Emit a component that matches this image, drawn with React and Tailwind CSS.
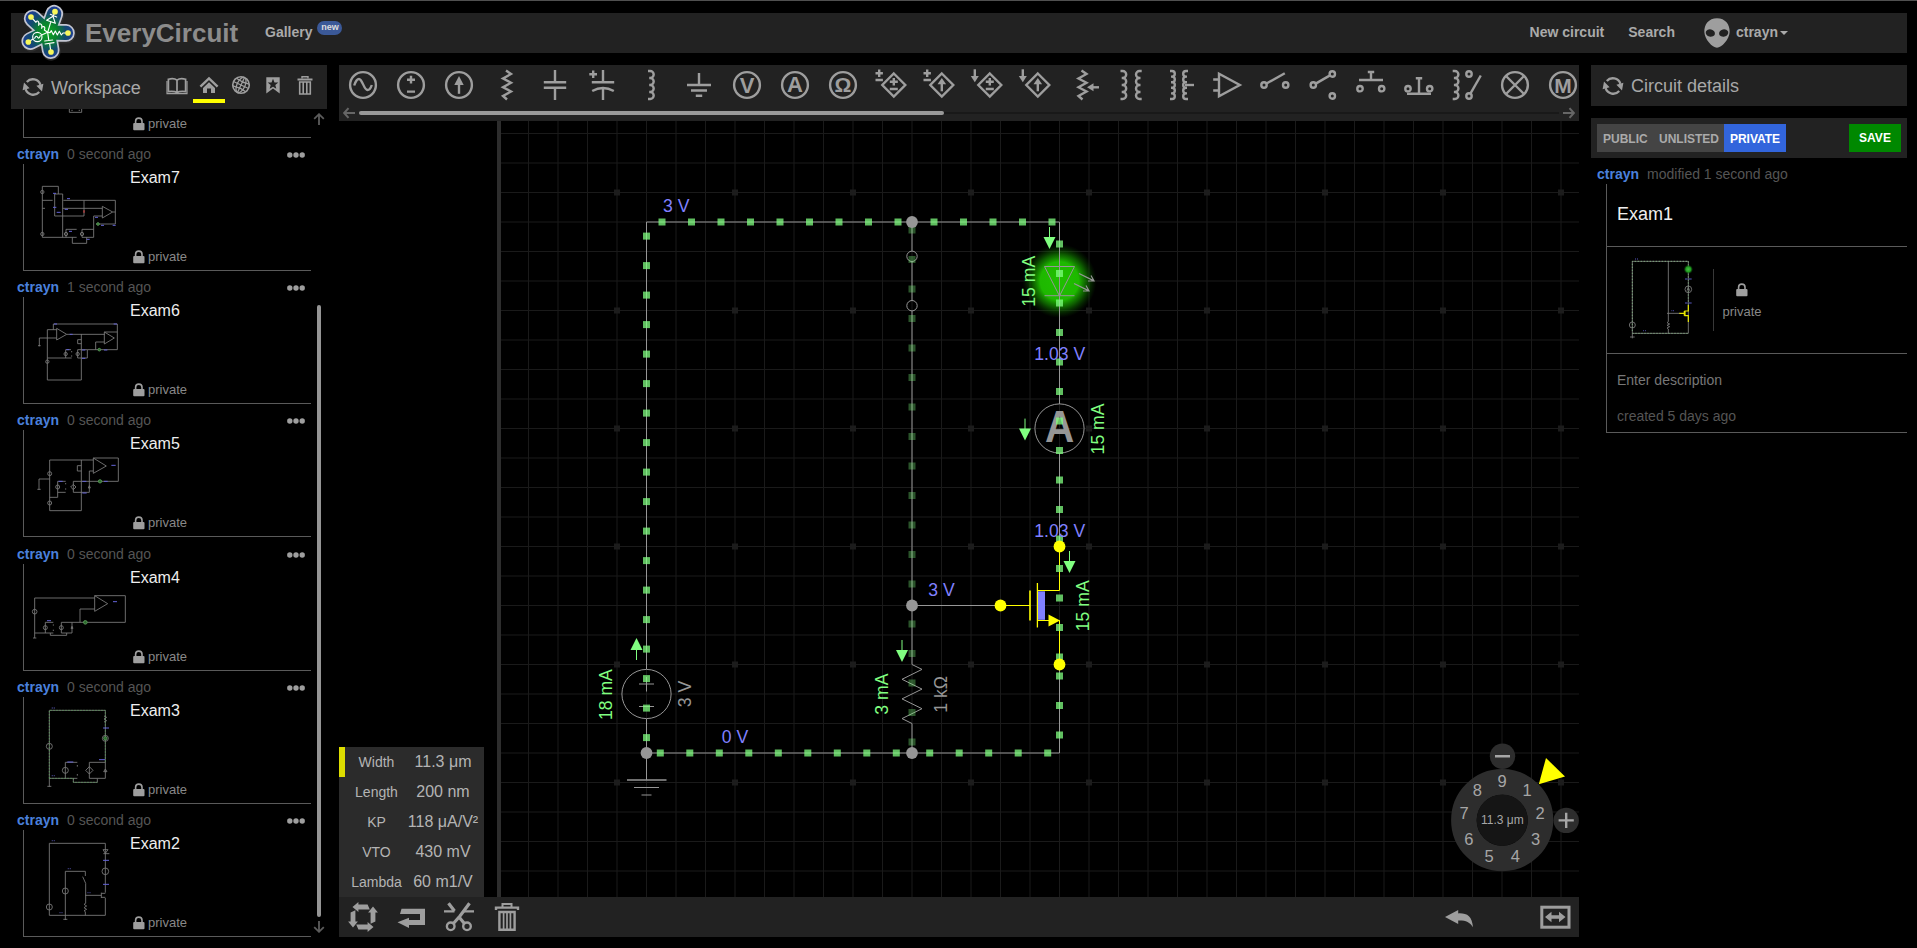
import React from "react";

const FG = "#9e9e9e";

/* ---------- small shared icons ---------- */

function Refresh() {
  return (
    <svg width="22" height="20" viewBox="-11 -10 22 20" className="shrink-0" fill="none" stroke={FG} strokeWidth="2.3">
      <path d="M-6.2 -5 A8 8 0 0 1 7.4 -2.2" />
      <path d="M6.2 5 A8 8 0 0 1 -7.4 2.2" />
      <path d="M3.4 -1.2 L10.4 -3.2 L9 4.6 Z M-3.4 1.2 L-10.4 3.2 L-9 -4.6 Z" fill={FG} stroke="none" />
    </svg>
  );
}

function Lock() {
  return (
    <svg width="12" height="14" viewBox="0 0 12 14" className="shrink-0">
      <path d="M2.6 7 V4.3 a3.2 3.2 0 0 1 6.4 0 V7" fill="none" stroke={FG} strokeWidth="1.6" />
      <rect x="0.2" y="6" width="11.3" height="7.2" rx="1" fill={FG} />
    </svg>
  );
}

function Trash() {
  return (
    <svg width="20" height="22" viewBox="-10 -11 20 22" fill="none" stroke={FG}>
      <path d="M-7.5 -6.5 H7.5" strokeWidth="2" />
      <path d="M-3 -7.5 V-9.3 H3 V-7.5" strokeWidth="1.4" />
      <path d="M-5.3 -4 V8 H5.3 V-4 Z" strokeWidth="1.6" />
      <path d="M-1.8 -4 V8 M1.8 -4 V8" strokeWidth="1.6" />
    </svg>
  );
}

function Logo() {
  const arms = [[93, 50], [165, 34], [204, 98], [153, 155], [85, 125]];
  const d = arms.map(([x, y]) => `M143 96 L${x + (143 - x) * 0.1} ${y + (96 - y) * 0.1}`).join(" ");
  return (
    <svg width="56" height="60" viewBox="60 8 168 180" className="-mt-[1px] shrink-0" strokeLinecap="round" strokeLinejoin="round" fill="none">
      <defs>
        <radialGradient id="core" gradientUnits="userSpaceOnUse" cx="143" cy="96" r="78">
          <stop offset="0" stopColor="#0ca81e" />
          <stop offset="0.4" stopColor="#0a8030" />
          <stop offset="0.7" stopColor="#124a70" />
          <stop offset="1" stopColor="#1f3f93" />
        </radialGradient>
      </defs>
      <path d={d} stroke="#333" strokeWidth="56" transform="translate(2 4)" opacity="0.7" />
      <path d={d} stroke="#c3c6d2" strokeWidth="53" />
      <path d={d} stroke="url(#core)" strokeWidth="43" />
      <circle cx="143" cy="96" r="30" fill="url(#core)" />
      <g stroke="#fff" strokeWidth="3.4">
        <path d="M143 96 L150 97 L154 91 L160 103 L166 92 L172 104 L178 93 L184 104 L189 98 L200 98" />
        <path d="M143 96 L146 118 M134 122 L158 119 M135 131 L162 127 M149 130 L152 150" />
        <circle cx="112" cy="110" r="14" />
        <path d="M104 114 C108 104 112 108 113 111 C116 116 119 112 121 106 M143 96 L125 104 M99 116 L88 123" />
        <path d="M143 96 L133 89 C139 77 125 76 125 84 C129 68 116 68 116 75 C119 59 108 60 108 66 L96 53" />
        <path d="M143 96 L152 66 M140 60 L166 69 L159 48 Z M151 42 L170 50 M160 47 L164 36" />
      </g>
      {arms.map(([x, y]) => (
        <circle key={x} cx={x} cy={y} r="8.5" fill="#f7f75a" />
      ))}
    </svg>
  );
}

/* ---------- component toolbar ---------- */

const Ring = ({ children }) => (
  <g>
    <circle r="12.9" />
    {children}
  </g>
);
const Letter = ({ children, y = 7.6, size = 22 }) => (
  <text x="0" y={y} textAnchor="middle" fill={FG} stroke="none" fontSize={size} fontWeight="700" fontFamily="Liberation Sans, sans-serif">
    {children}
  </text>
);
const ZIG = "M-1 -14.5 L4 -11 L-4 -6.5 L4 -2.3 L-4 2.3 L4 6.5 L-4 11 L0 14.5";
const COIL = "M-4 -14 h2.2 a3.4 3.4 0 0 1 0 7 h-1 h1 a3.5 3.5 0 0 1 0 7 h-1 h1 a3.5 3.5 0 0 1 0 7 h-1 h1 a3.4 3.4 0 0 1 0 7 h-2.2";
const TIGHT = "M-4 -14 h2 a2.6 2.6 0 0 1 0 5.6 h-1 h1 a2.6 2.6 0 0 1 0 5.6 h-1 h1 a2.6 2.6 0 0 1 0 5.6 h-1 h1 a2.6 2.6 0 0 1 0 5.6 h-1 h1 a2.6 2.6 0 0 1 0 5.6 h-2";
const Up = () => (
  <g>
    <path d="M0 6.3 V-2" />
    <path d="M0 -7 L4.3 -0.8 H-4.3 Z" fill={FG} stroke="none" />
  </g>
);
const PM = () => <path d="M-4 -3.2 H4 M0 -7 V0.6 M-4 4 H4" />;
const Sense = () => <path d="M-17.5 -11.7 h7.4 M-13.8 -15.4 v7.4 M-17.5 -5 h7.4" />;
const SenseI = () => (
  <g>
    <path d="M-14.2 -15.7 V-8" />
    <path d="M-18.2 -9 h8 L-14.2 -2.8 Z" fill={FG} stroke="none" />
  </g>
);
const Dependent = ({ left, children }) => (
  <g>
    {left}
    <g transform="translate(0.8 0)">
      <path d="M0 -11.5 L11.5 0 L0 11.5 L-11.5 0 Z" />
      {children}
    </g>
  </g>
);

const TOOLS = [
  <Ring><path d="M-8.8 0.5 C-7.5 -3.5 -6 -6 -4 -6 C-0.5 -6 0.8 5 4.5 5 C6.6 5 8 2.5 8.8 0" /></Ring>,
  <Ring><path d="M-4 -5.3 H4 M0 -9.2 V-1.4 M-4 6.6 H4" /></Ring>,
  <Ring><g><path d="M0 8.8 V-2" /><path d="M0 -9 L4.7 0 H-4.7 Z" fill={FG} stroke="none" /></g></Ring>,
  <path d={ZIG} />,
  <path d="M0 -15 V-2.8 M-11.2 -2.8 H11.2 M-11.2 2.8 H11.2 M0 2.8 V15" />,
  <path d="M0 -15 V-2.8 M-11.2 -2.8 H11.2 M0 3 V15 M-10.8 6 Q0 0 10.8 6 M-13.7 -10.7 H-6 M-9.8 -14.5 V-6.9" />,
  <path d={COIL} transform="translate(1 0)" />,
  <path d="M0 -12 V0 M-12 0 H12 M-8 5.5 H8 M-3.2 10.8 H3.2" />,
  <Ring><Letter>V</Letter></Ring>,
  <Ring><Letter y={6.8}>A</Letter></Ring>,
  <Ring><Letter y={7} size={21}>Ω</Letter></Ring>,
  <Dependent left={<Sense />}><PM /></Dependent>,
  <Dependent left={<Sense />}><Up /></Dependent>,
  <Dependent left={<SenseI />}><PM /></Dependent>,
  <Dependent left={<SenseI />}><Up /></Dependent>,
  <g>
    <path d={ZIG} transform="translate(-2.5 0)" />
    <path d="M14 2.3 H7" />
    <path d="M2 2.3 L8.5 -1.7 V6.3 Z" fill={FG} stroke="none" />
  </g>,
  <g>
    <path d={COIL} transform="translate(-8.5 0)" />
    <path d={COIL} transform="translate(4.7 0) scale(-1 1)" />
  </g>,
  <g>
    <path d={TIGHT} transform="translate(-7 0)" />
    <path d={TIGHT} transform="translate(3 0) scale(-1 1)" />
    <path d="M4 0 H13" />
  </g>,
  <path d="M-10 -11.2 V11.2 L10.8 0 Z M-15.8 -5.5 H-10 M-15.8 5.5 H-10" />,
  <g>
    <circle cx="-13" r="2.7" /><circle cx="8.7" r="2.7" />
    <path d="M-10.5 -1.5 L7.8 -11.8" />
  </g>,
  <g>
    <circle cx="-11.7" r="2.7" /><circle cx="7.3" cy="-11" r="2.7" /><circle cx="7.3" cy="11" r="2.7" />
    <path d="M-9.3 -1.4 L5 -9.6" />
  </g>,
  <g>
    <circle cx="-13" cy="3.7" r="2.7" /><circle cx="8.7" cy="3.7" r="2.7" />
    <path d="M-14 -5 H10 M-2 -13 V-5 M-5.2 -13 H1.2" />
  </g>,
  <g>
    <circle cx="-13" cy="3.7" r="2.7" /><circle cx="8.7" cy="3.7" r="2.7" />
    <path d="M-14 8.7 H10 M-2 -6.7 V8.7 M-5.2 -6.7 H1.2" />
  </g>,
  <g>
    <path d={COIL} transform="translate(-12.3 0)" />
    <circle cy="-11" r="2.7" /><circle cy="11" r="2.7" />
    <path d="M1.4 8.6 L11.8 -9.5" />
  </g>,
  <Ring><path d="M-9 -9 L9 9 M-9 9 L9 -9" /></Ring>,
  <Ring><Letter y={7.6} size={21}>M</Letter></Ring>,
];

function Toolbar() {
  return (
    <div className="h-14 overflow-hidden bg-[#222222]">
      <div className="flex h-10 w-[1248px]">
        {TOOLS.map((t, i) => (
          <svg key={i} width="48" height="40" viewBox="-24 -20 48 40" className="shrink-0" fill="none" stroke={FG} strokeWidth="2.4">
            <g transform={i > 10 && i < 24 ? "translate(2 0)" : undefined}>{t}</g>
          </svg>
        ))}
      </div>
      <div className="flex h-4 items-center pl-1 pr-1">
        <svg width="12" height="12" viewBox="0 0 12 12" className="shrink-0" fill="none" stroke="#666" strokeWidth="2"><path d="M12 6 H1.5 M5.5 1.2 L1.2 6 L5.5 10.8" /></svg>
        <div className="ml-1 h-1 w-[585px] rounded-full bg-[#999999]" />
        <div className="h-0.5 w-[615px] bg-[#191919]" />
        <svg width="12" height="12" viewBox="0 0 12 12" className="ml-1 shrink-0" fill="none" stroke="#666" strokeWidth="2"><path d="M0 6 H10.5 M6.5 1.2 L10.8 6 L6.5 10.8" /></svg>
      </div>
    </div>
  );
}

/* ---------- schematic ---------- */

const range = (start, end, step = 29.5) => {
  const out = [];
  for (let v = start; v <= end + 0.5; v += step) out.push(v);
  return out;
};

const V = ({ x, ys, o = 0.75 }) => ys.map((y) => <rect key={`${x}-${y}`} x={x - 3.5} y={y - 3.5} width="7" height="7" fill="#80ff80" opacity={o} />);
const H = ({ y, xs }) => xs.map((x) => <rect key={`${x}-${y}`} x={x - 3.5} y={y - 3.5} width="7" height="7" fill="#80ff80" opacity="0.75" />);

const Down = ({ x, y }) => (
  <g>
    <path d={`M${x} ${y} V${y + 11}`} stroke="#80ff80" />
    <path d={`M${x - 6} ${y + 10} H${x + 6} L${x} ${y + 22} Z`} fill="#80ff80" />
  </g>
);
const Rot = ({ x, y, c = "#80ff80", children }) => (
  <text transform={`translate(${x} ${y - 0.3}) rotate(-90)`} fill={c} fontSize="17.6">{children}</text>
);

function Schematic() {
  const gx = range(528.5, 1578);
  const gy = range(133.5, 896);
  return (
    <svg width="1240" height="776" viewBox="339 121 1240 776" className="block" fontFamily="Liberation Sans, sans-serif">
      <defs>
        <radialGradient id="glow">
          <stop offset="0" stopColor="#20c000" />
          <stop offset="0.52" stopColor="#1eb800" />
          <stop offset="0.72" stopColor="#159000" stopOpacity="0.65" />
          <stop offset="1" stopColor="#0a5000" stopOpacity="0" />
        </radialGradient>
      </defs>
      <g stroke="#1a1a1a">
        {gx.map((x) => <path key={x} d={`M${x} 121 V897`} />)}
        {gy.map((y) => <path key={y} d={`M501 ${y} H1579`} />)}
      </g>
      <g fill="#1c1c1c">
        {range(617, 1562, 118).map((x) => range(192.5, 790, 118).map((y) => <rect key={`${x}_${y}`} x={x - 3} y={y - 3} width="6" height="6" />))}
      </g>
      <rect x="497" y="121" width="4" height="776" fill="#2d2d2d" />

      <circle cx="1059.5" cy="281" r="37" fill="url(#glow)" />

      <g fill="none" stroke="#969696">
        <path d="M646.5 669 V222 H1059.5 V404" />
        <path d="M1059.5 453 V546.5 M1059.5 664.5 V753 H646.5 V719 M646.5 753 V780" />
        <path d="M912 222 V251 M912 261.5 V300.5 M912 311 V664.5 M912 723.5 V753 M912 605.5 H1000" />
        <circle cx="912" cy="256.3" r="5.2" />
        <circle cx="912" cy="305.7" r="5.2" />
        <path d="M912 664.5 L922 669.4 L902 679.3 L922 689.1 L902 698.9 L922 708.7 L902 718.6 L912 723.5" />
        <circle cx="646.5" cy="694" r="24.6" />
        <path d="M639 684 H654 M646.5 677 V691.5 M639 706.5 H654" />
        <path d="M627 780 H666.5" strokeWidth="1.4" />
        <path d="M634 787.5 H659 M641.5 795 H651.5" />
        <path d="M1044.5 266.5 H1074.5 L1059.5 296 Z M1044.5 295.7 H1074.5" />
        <path d="M1079 273.5 L1093.5 280.6 M1088 281 L1094 281 L1091 275.5 M1074 283.5 L1088.5 290.6 M1083 291 L1089 291 L1086 285.5" strokeWidth="1.2" />
        <circle cx="1059.5" cy="428.5" r="24.6" />
      </g>
      <text transform="translate(1059.5 442) scale(.9 1)" textAnchor="middle" fontSize="45" fontWeight="700" fill="#969696">A</text>

      <g stroke="#ffff00" fill="none">
        <path d="M1000 605.5 H1030 M1037.5 590.5 H1059.5 V546.5 M1037.5 620.5 H1059.5 V664.5" />
        <path d="M1030 590.5 V620.5" strokeWidth="1.6" />
        <path d="M1037.4 583 V627.5" strokeWidth="1.3" />
        <path d="M1048.5 614.5 V626.5 L1060 620.5 Z" fill="#ffff00" stroke="none" />
      </g>
      <rect x="1038" y="591.3" width="7" height="28.5" fill="#8080ff" />

      <H y={222} xs={range(662, 898.5)} />
      <H y={222} xs={range(934, 1052)} />
      <H y={753} xs={range(660.3, 897)} />
      <H y={753} xs={range(929.7, 1048)} />
      <V x={646.5} ys={range(236.1, 738)} />
      <V x={912} ys={range(230, 584.5)} o={0.33} />
      <V x={912} ys={range(624, 742)} o={0.33} />
      <V x={1059.5} ys={range(244, 657.5)} />
      <V x={1059.5} ys={range(676, 735.5)} />

      <g fill="#969696">
        <circle cx="646.5" cy="753" r="5.9" />
        <circle cx="912" cy="222" r="5.9" />
        <circle cx="912" cy="605.5" r="5.9" />
        <circle cx="912" cy="753" r="5.9" />
      </g>
      <g fill="#ffff00">
        <circle cx="1000.5" cy="605.5" r="5.9" />
        <circle cx="1059.5" cy="546.5" r="5.9" />
        <circle cx="1059.5" cy="664.5" r="5.9" />
      </g>

      <path d="M636.5 660 V649" stroke="#80ff80" />
      <path d="M630.5 650 H642.5 L636.5 638 Z" fill="#80ff80" />
      <Down x={1049.5} y={227} />
      <Down x={1025} y={418.6} />
      <Down x={1069.5} y={551} />
      <Down x={902} y={640} />

      <g fill="#8080ff" fontSize="17.6">
        <text x="663" y="212">3 V</text>
        <text x="1059.7" y="360" textAnchor="middle">1.03 V</text>
        <text x="1059.7" y="537" textAnchor="middle">1.03 V</text>
        <text x="928.3" y="595.5">3 V</text>
        <text x="721.8" y="743">0 V</text>
      </g>
      <Rot x={1035} y={307}>15 mA</Rot>
      <Rot x={1103.7} y={454.7}>15 mA</Rot>
      <Rot x={1089} y={631.5}>15 mA</Rot>
      <Rot x={888} y={715}>3 mA</Rot>
      <Rot x={612} y={720.3}>18 mA</Rot>
      <Rot x={947} y={713} c="#969696">1 kΩ</Rot>
      <Rot x={690.7} y={707.5} c="#969696">3 V</Rot>
    </svg>
  );
}

function Wheel() {
  return (
    <svg width="130" height="130" viewBox="1449 742 130 130" className="absolute bottom-[25px] right-0" fontFamily="Liberation Sans, sans-serif" fill="#a6a6a6" textAnchor="middle">
      <circle cx="1502.2" cy="820.2" r="38.3" fill="none" stroke="#2d2d2d" strokeWidth="25.6" />
      <circle cx="1502.2" cy="820.2" r="25.6" fill="#151515" />
      <circle cx="1502.5" cy="756.3" r="12.7" fill="#2d2d2d" />
      <circle cx="1566.2" cy="820.4" r="12.7" fill="#2d2d2d" />
      <path d="M1495 756.3 H1510 M1558.6 820.4 H1573.8 M1566.2 812.8 V828" stroke="#a6a6a6" strokeWidth="2.4" />
      <path d="M1546 758 L1565 776.6 L1538.8 784.2 Z" fill="#ffff00" />
      {[9, 1, 2, 3, 4, 5, 6, 7, 8].map((n, i) => {
        const a = (i * 40 * Math.PI) / 180;
        return <text key={n} x={1502.2 + 38.6 * Math.sin(a)} y={826 - 38.6 * Math.cos(a)} fontSize="16.5">{n}</text>;
      })}
      <text x="1502.4" y="824" fontSize="12">11.3 μm</text>
    </svg>
  );
}

const PARAMS = [
  ["Width", "11.3 μm"],
  ["Length", "200 nm"],
  ["KP", "118 μA/V²"],
  ["VTO", "430 mV"],
  ["Lambda", "60 m1/V"],
];

function Params() {
  return (
    <div className="absolute bottom-0 left-0 w-[145px] bg-[#2b2b2b] text-[#b4b4b4]">
      {PARAMS.map(([k, v], i) => (
        <div key={k} className="flex h-[30px] items-center whitespace-nowrap">
          <div className={i === 0 ? "h-full w-1.5 bg-[#dddd00]" : "h-full w-1.5"} />
          <div className="w-[63px] text-center text-sm">{k}</div>
          <div className="w-[70px] text-center text-base"><span className="-mx-2">{v}</span></div>
        </div>
      ))}
    </div>
  );
}

const Cell = ({ children, className = "" }) => (
  <svg width="48" height="40" viewBox="-24 -20 48 40" className={className} fill="none" stroke={FG} strokeWidth="2.4">{children}</svg>
);

function BottomBar() {
  return (
    <div className="flex h-10 bg-[#222222]">
      <Cell>
        {[0, 90, 180, 270].map((r) => (
          <path key={r} transform={`rotate(${r})`} d="M-10.5 -10 L-4.6 -14.9 V-12.4 H4.6 L6.8 -7.6 H-4.6 V-5.1 Z" fill={FG} stroke="none" />
        ))}
      </Cell>
      <Cell>
        <path d="M-9.5 -8.3 H14 V8 H-2 V11 L-13.5 5.3 L-2 0.8 V3 H9 V-3 H-11 Z" fill={FG} stroke="none" />
      </Cell>
      <Cell>
        <circle cx="-8.3" cy="9.3" r="3.8" /><circle cx="8" cy="9.3" r="3.8" />
        <path d="M-15 -5.6 H-4.5 M4.5 -5.6 H15" />
        <path d="M-5.6 6.5 L1 -1 L10.5 -13.8" strokeWidth="3.2" />
        <path d="M5.4 6.5 L0 0 M-4.5 -6 L-10.5 -13.8" strokeWidth="3.2" />
      </Cell>
      <Cell>
        <path d="M-11 -7 V-9.4 H11 V-7" />
        <path d="M-4.5 -10 V-13 H4.5 V-10" strokeWidth="2" />
        <path d="M-7.6 -5 V12.8 H7.6 V-5 Z" />
        <path d="M-3.4 -5 V12 M0 -5 V12 M3.4 -5 V12" strokeWidth="1.7" />
      </Cell>
      <Cell className="ml-auto">
        <path d="M-14 0 L-0.8 -7 V-3.6 C8 -4 13 -1 14 10.3 C10.5 5 7 3.4 -0.8 3.6 V7 Z" fill={FG} stroke="none" />
      </Cell>
      <Cell className="ml-12">
        <rect x="-13.2" y="-9.8" width="27.2" height="20" strokeWidth="3" />
        <path d="M-10 0 L-3.5 -5.2 V-1.8 H4 V-5.2 L10.5 0 L4 5.2 V1.8 H-3.5 V5.2 Z" fill={FG} stroke="none" />
      </Cell>
    </div>
  );
}

/* ---------- workspace list ---------- */

const dia = (x, y, r) => `M${x} ${y - r} L${x + r} ${y} L${x} ${y + r} L${x - r} ${y} Z`;

const ITEMS = [
  {
    title: "Exam7", ago: "0 second ago", top: 492,
    wire: "M127 559 V712 H230 M127 559 H175 V582 M164 648 V582 H188 V712 M164 648 H252 V601 M127 601 H158 M190 601 H346 V672 H288 M188 625 H307 M307 619 V654 L338 636 Z M338 636 H346 M307 648 H281 V712 H246 V688 H281 M198 712 V688 H230 M217 712 V730 H260 V712 M127 625 h8",
    circ: [[127, 576, 5], [127, 702, 5], [198, 702, 5], [246, 702, 5]],
    blue: "M159 580 h9 M201 596 h9 M159 622 h10 M194 628 h10 M170 637 h12 M285 652 h9 M303 676 h9 M338 676 h9 M207 694 h9 M260 718 h9",
    led: [294, 672, 4], red: [252, 635],
  },
  {
    title: "Exam6", ago: "1 second ago", top: 82,
    wire: "M160 180 V163 H352 V240 H262 M142 180 H170 M142 180 V331 H244 V193 M170 176 V211 L200 194 Z M118 230 V205 H170 M114 228 h8 M200 194 H314 M313 187 V223 L343 205 Z H352 M287 240 V217 H313 M142 265 H215 M197 265 V240 H213 M215 244 v4 M215 257 v4 M233 240 H262 V265 H233 Z M244 210 H233 V222 H244",
    circ: [[142, 276, 5], [197, 253, 5], [233, 253, 5]],
    blue: "M162 163 h9 M341 163 h10 M209 194 h9 M199 240 h9 M246 241 h10 M246 266 h10 M312 241 h10", led: [298, 240, 4],
  },
  {
    title: "Exam5", ago: "0 second ago", top: 481,
    wire: "M149 571 H280 M149 571 V723 H244 V571 M280 565 V611 L319 589 Z H355 V635 H220 V668 H268 V604 H280 M117 660 V628 H149 M112 659 h10 M149 683 H173 V635 H197 M173 668 H197 M197 640 v4 M197 656 v4 M244 588 H232 V604 H244 M265 655 L268 648 L271 655 Z " + dia(220, 652, 8),
    circ: [[149, 612, 6], [149, 700, 6], [173, 652, 6]],
    blue: "M176 635 h12 M247 635 h12 M247 670 h13 M334 587 h13 M312 635 h11", led: [300, 635, 5],
  },
  {
    title: "Exam4", ago: "0 second ago", top: -107, tall: true,
    wire: "M104 115 V-5 H284 M284 -12 V35 L323 12 Z H376 V68 H184 V100 H216 V68 M240 68 V28 H284 M99 115 h10 M104 100 H160 M136 100 V68 H160 M160 74 v4 M160 90 v4 M151 100 V107 H200 V100 M213 86 L216 80 L219 86 Z",
    circ: [[104, 36, 7], [136, 84, 6], [184, 84, 6]], blue: "M141 63 h12 M339 6 h12", led: [256, 68, 5.5],
  },
  {
    title: "Exam3", ago: "0 second ago", top: 291,
    wire: "M148 560 V331 H316 V535 H292 M142 559 h12 M148 535 H232 M196 535 V487 H232 M232 495 v5 M232 522 v5 M316 487 H268 V535 H292 M220 535 V547 H292 V535 M312 348 l8 4 l-8 5 l8 5 l-8 4 M311 515 L316 507 L321 515 Z " + dia(268, 511, 11),
    circ: [[148, 439, 9], [196, 511, 9], [316, 415, 9]],
    blue: "M309 384 h18 M202 486 h18 M297 479 h18", dim: "M155 324 h4 M161 324 h4 M155 527 h4 M161 527 h4", led: [316, 415, 5],
    dots: "M148 535 V331 H316 V487 M148 535 H220 V547 H292",
  },
  {
    title: "Exam2", ago: "0 second ago", top: 690,
    wire: "M148 946 V730 H316 V878 M316 894 V946 H148 M196 960 V814 H256 V828 M248 830 L257 850 V910 l-5 3 l8 5 l-8 5 l8 5 l-8 4 l4 3 V946 M256 886 H304 M304 878 V894 M304 880 H316 M304 892 H316 M190 958 h12 M309 749 H324 L316 760 Z M310 761 H328",
    circ: [[148, 921, 9], [196, 873, 9], [316, 814, 10]],
    blue: "M309 781 h18 M309 853 h18", dim: "M155 722 h4 M161 722 h4 M203 806 h4 M209 806 h4 M262 878 h4 M268 878 h4 M178 938 h4 M184 938 h4",
  },
];

function Thumb({ item }) {
  return (
    <svg width="110" height="106" viewBox={`72 ${item.top} 330 318`} className="shrink-0 overflow-hidden" fill="none" stroke="#7c7c7c" strokeWidth="2.6">
      <path d={item.wire} />
      {item.dots && <path d={item.dots} stroke="#5aa05a" strokeDasharray="4 5" />}
      {item.circ.map(([x, y, r]) => <circle key={`${x}-${y}`} cx={x} cy={y} r={r} />)}
      <path d={item.blue} stroke="#6464d8" strokeWidth="3" />
      {item.dim && <path d={item.dim} stroke="#33336a" strokeWidth="4" />}
      {item.led && <circle cx={item.led[0]} cy={item.led[1]} r={item.led[2]} stroke="#5c9c5c" strokeWidth="2.6" fill="#2c6a2c" />}
      {item.red && <path d={`M${item.red[0]} ${item.red[1] - 4} v7`} stroke="#c04040" strokeWidth="4" />}
    </svg>
  );
}

function Privacy() {
  return (
    <div className="flex items-center pl-[3px] text-[13px] leading-4 text-[#888888]">
      <Lock />
      <span className="ml-[3px]">private</span>
    </div>
  );
}

function FirstItem() {
  return (
    <div className="ml-3 mr-4 flex h-[29px] shrink-0 items-end border-b border-l border-[#5a5a5a]">
      <svg width="106" height="28" viewBox="72 327 318 84" className="shrink-0" fill="none" stroke="#7c7c7c" strokeWidth="2.6">
        <path d="M208 327 V337 H245 V327 M214 331 h4 M236 331 h4" />
      </svg>
      <div className="pb-[5px]"><Privacy /></div>
    </div>
  );
}

function Item({ item }) {
  return (
    <div className={item.tall ? "flex h-[134px] shrink-0 flex-col" : "flex h-[133px] shrink-0 flex-col"}>
      <div className={item.tall ? "flex h-[27px] items-start pl-1.5 pt-[7px] text-sm leading-5" : "flex h-[26px] items-start pl-1.5 pt-[6px] text-sm leading-5"}>
        <span className="font-bold text-[#4a80dc]">ctrayn</span>
        <span className="ml-2 text-[#555555]">{item.ago}</span>
        <svg width="18" height="6" viewBox="0 0 18 6" className="ml-auto mr-[22px] mt-[8px]" fill={FG}>
          <circle cx="2.8" cy="3" r="2.7" /><circle cx="9" cy="3" r="2.7" /><circle cx="15.2" cy="3" r="2.7" />
        </svg>
      </div>
      <div className="ml-3 mr-4 flex flex-1 border-b border-l border-[#5a5a5a]">
        <Thumb item={item} />
        <div className="-ml-1 flex flex-1 flex-col justify-between pb-[5px] pt-[2px]">
          <div className="text-base leading-6 text-[#eeeeee]">{item.title}</div>
          <Privacy />
        </div>
      </div>
    </div>
  );
}

function Workspace() {
  return (
    <div className="flex w-[316px] flex-col">
      <div className="flex h-11 shrink-0 items-center bg-[#222222] pl-[11px]">
        <Refresh />
        <span className="ml-[7px] w-[103px] pt-px text-lg text-[#a8a8a8]">Workspace</span>
        <div className="ml-[7px] flex h-full text-center">
          <div className="flex w-8 justify-center pt-[10px]">
            <svg width="22" height="22" viewBox="-11 -11 22 22" fill="none" stroke={FG} strokeWidth="1.7">
              <path d="M0 6.5 C-2 5.3 -5 5.3 -8.6 5.6 V-6.8 C-5 -7.8 -2 -7.5 0 -5.8 C2 -7.5 5 -7.8 8.6 -6.8 V5.6 C5 5.3 2 5.3 0 6.5 Z M0 -6 V7" />
              <path d="M-10 -5 V7.6 H10 V-5" strokeWidth="1.2" />
            </svg>
          </div>
          <div className="flex w-8 flex-col items-center pt-[10px]">
            <svg width="22" height="22" viewBox="-11 -11 22 22" fill={FG}>
              <path d="M-8.6 0.6 L0 -7.6 L8.6 0.6" fill="none" stroke={FG} strokeWidth="2.4" />
              <path d="M-6 2 L0 -3.8 L6 2 V7 H2 V2.5 H-2 V7 H-6 Z" />
            </svg>
            <div className="mt-0.5 h-1 w-8 bg-[#ffff00]" />
          </div>
          <div className="flex w-8 justify-center pt-[9px]">
            <svg width="22" height="22" viewBox="-11 -11 22 22" fill="none" stroke={FG} strokeWidth="1.3">
              <circle r="8.3" strokeWidth="1.6" />
              <g transform="rotate(25)">
                <ellipse rx="4" ry="8.3" />
                <path d="M0 -8.3 V8.3 M-8.3 0 H8.3 M-7 -4.2 Q0 -2.6 7 -4.2 M-7 4.2 Q0 2.6 7 4.2" />
              </g>
            </svg>
          </div>
          <div className="flex w-8 justify-center pt-[10px]">
            <svg width="22" height="22" viewBox="-11 -11 22 22">
              <path d="M-6.7 -8.7 H6.7 V7.5 L0 2.6 L-6.7 7.5 Z" fill={FG} />
              <path d="M0 -7.3 L1.5 -3.6 L5.3 -3.4 L2.3 -1 L3.3 2.8 L0 0.7 L-3.3 2.8 L-2.3 -1 L-5.3 -3.4 L-1.5 -3.6 Z" fill="#222" />
            </svg>
          </div>
          <div className="flex w-8 justify-center pt-[10px]"><Trash /></div>
        </div>
      </div>
      <div className="flex h-[828px]">
        <div className="flex w-[316px] shrink-0 flex-col">
          <div className="pr-0"><FirstItem /></div>
          {ITEMS.map((it) => <Item key={it.title} item={it} />)}
        </div>
        <div className="-ml-[14px] flex w-3 shrink-0 flex-col items-center pt-1">
          <svg width="12" height="12" viewBox="0 0 12 12" className="shrink-0" fill="none" stroke="#5c5c5c" strokeWidth="1.8"><path d="M6 12 V1.5 M1.2 5.8 L6 1.2 L10.8 5.8" /></svg>
          <div className="mt-[180px] h-[612px] w-1 shrink-0 rounded-full bg-[#959595]" />
          <svg width="12" height="12" viewBox="0 0 12 12" className="mt-1 shrink-0" fill="none" stroke="#5c5c5c" strokeWidth="1.8"><path d="M6 0 V10.5 M1.2 6.2 L6 10.8 L10.8 6.2" /></svg>
        </div>
      </div>
    </div>
  );
}

/* ---------- details ---------- */

function DetailThumb() {
  return (
    <svg width="72" height="86" viewBox="372 765 216 258" className="-mt-[3px]" fill="none" stroke="#7c7c7c" strokeWidth="2.6">
      <defs>
        <radialGradient id="mini"><stop offset="0" stopColor="#48b848" /><stop offset="0.55" stopColor="#1fa01f" /><stop offset="1" stopColor="#0a3a0a" stopOpacity="0.1" /></radialGradient>
      </defs>
      <path d="M397 1012 V781 H565 V997 H397 M505 781 V962 l-4 3 l8 4 l-8 4 l8 4 l-8 4 l4 3 V997 M501 937 H540 M390 1008 H404" />
      <path d="M397 990 V781 H565 M397 997 H565 M565 781 V912" stroke="#7fb07f" strokeDasharray="4 5" />
      <circle cx="397" cy="972" r="9" /><circle cx="565" cy="865" r="10" />
      <path d="M561 869 L565 859 L569 869" />
      <circle cx="565" cy="805" r="14" fill="url(#mini)" stroke="none" />
      <path d="M538 937 H553 M553 930 V944 M565 912 V930 H555 V944 H565 V963" stroke="#e8e800" strokeWidth="3.6" />
      <path d="M405 774 h3 M411 774 h3 M555 834 h8 M566 834 h9 M555 906 h8 M566 906 h9 M514 929 h3 M519 929 h3 M429 989 h3 M435 989 h3" stroke="#3a3a80" strokeWidth="4" />
    </svg>
  );
}

function Details() {
  return (
    <div className="flex w-[316px] flex-col">
      <div className="flex h-[41px] items-center bg-[#222222] pl-[11px]">
        <Refresh />
        <span className="ml-[7px] text-lg leading-none text-[#a8a8a8]">Circuit details</span>
      </div>
      <div className="mt-3 flex h-10 items-center justify-between bg-[#222222] px-1.5 text-xs font-bold">
        <div className="flex h-7 bg-[#444444] pt-px leading-[29px] text-[#aaaaaa]">
          <span className="w-14 pl-1.5">PUBLIC</span>
          <span className="w-[71px] pl-1.5">UNLISTED</span>
          <span className="-mt-px h-7 w-[62px] bg-[#3265dc] pt-px text-center text-white">PRIVATE</span>
        </div>
        <button className="h-7 w-[52px] bg-[#008800] text-white">SAVE</button>
      </div>
      <div className="flex h-[26px] items-start pl-1.5 pt-[6px] text-sm leading-5">
        <span className="font-bold text-[#4a80dc]">ctrayn</span>
        <span className="ml-2 text-[#555555]">modified 1 second ago</span>
      </div>
      <div className="ml-[15px] flex h-[249px] flex-col border-b border-l border-[#5a5a5a]">
        <div className="flex h-[63px] items-center border-b border-[#5a5a5a] pb-0.5 pl-[10px] text-lg leading-6 text-[#eeeeee]">Exam1</div>
        <div className="flex h-[107px] items-center border-b border-[#5a5a5a] pl-[17px]">
          <DetailThumb />
          <div className="ml-[17px] h-[62px] w-px bg-[#383838]" />
          <div className="ml-2 flex w-10 flex-col items-center gap-[7px] pt-[3px] text-[13px] leading-4 text-[#888888]">
            <div className="-ml-px"><Lock /></div>
            <span>private</span>
          </div>
        </div>
        <div className="flex flex-1 flex-col gap-4 pl-[10px] pt-[16px] text-sm leading-5">
          <span className="text-[#777777]">Enter description</span>
          <span className="text-[#555555]">created 5 days ago</span>
        </div>
      </div>
    </div>
  );
}

function Header() {
  return (
    <div className="mx-[10px] ml-[11px] flex h-10 items-center bg-[#222222] text-sm font-bold text-[#aaaaaa]">
      <div className="ml-[9px] flex h-10 w-[65px] items-center"><Logo /></div>
      <span className="w-[180px] text-[26px] leading-none text-[#8c8c8c]">EveryCircuit</span>
      <span className="-mt-[3px]">Gallery</span>
      <span className="-mt-[11px] ml-[5px] flex h-[14px] w-[25px] items-center justify-center rounded-full bg-[#3b5998] pb-px text-[9px] leading-none text-[#dddddd]">new</span>
      <div className="ml-auto mr-[119px] flex items-center">
        <span className="-mt-[3px]">New circuit</span>
        <span className="-mt-[3px] ml-[24px]">Search</span>
        <svg width="26" height="30" viewBox="612 54 78 90" className="ml-[29px]">
          <path d="M651 55 C676 55 690 74 689 96 C688 118 665 143 651 143 C637 143 614 118 613 96 C612 74 626 55 651 55 Z" fill={FG} />
          <ellipse cx="631" cy="99" rx="14" ry="11" transform="rotate(14 631 99)" fill="#222" />
          <ellipse cx="671" cy="99" rx="14" ry="11" transform="rotate(-14 671 99)" fill="#222" />
        </svg>
        <span className="-mt-[3px] ml-[6px]">ctrayn</span>
        <svg width="8" height="4" viewBox="0 0 8 4" className="ml-[2px]"><path d="M0 0 H8 L4 4 Z" fill="#aaa" /></svg>
      </div>
    </div>
  );
}

export default function App() {
  return (
    <div className="h-[948px] w-[1917px] overflow-hidden border-t border-[#505050] bg-black pt-3 font-['Liberation_Sans',Arial,sans-serif]">
      <Header />
      <div className="ml-[11px] mt-3 flex gap-3">
        <Workspace />
        <div className="flex w-[1240px] flex-col">
          <Toolbar />
          <div className="relative h-[776px]">
            <Schematic />
            <Params />
            <Wheel />
          </div>
          <BottomBar />
        </div>
        <Details />
      </div>
    </div>
  );
}
